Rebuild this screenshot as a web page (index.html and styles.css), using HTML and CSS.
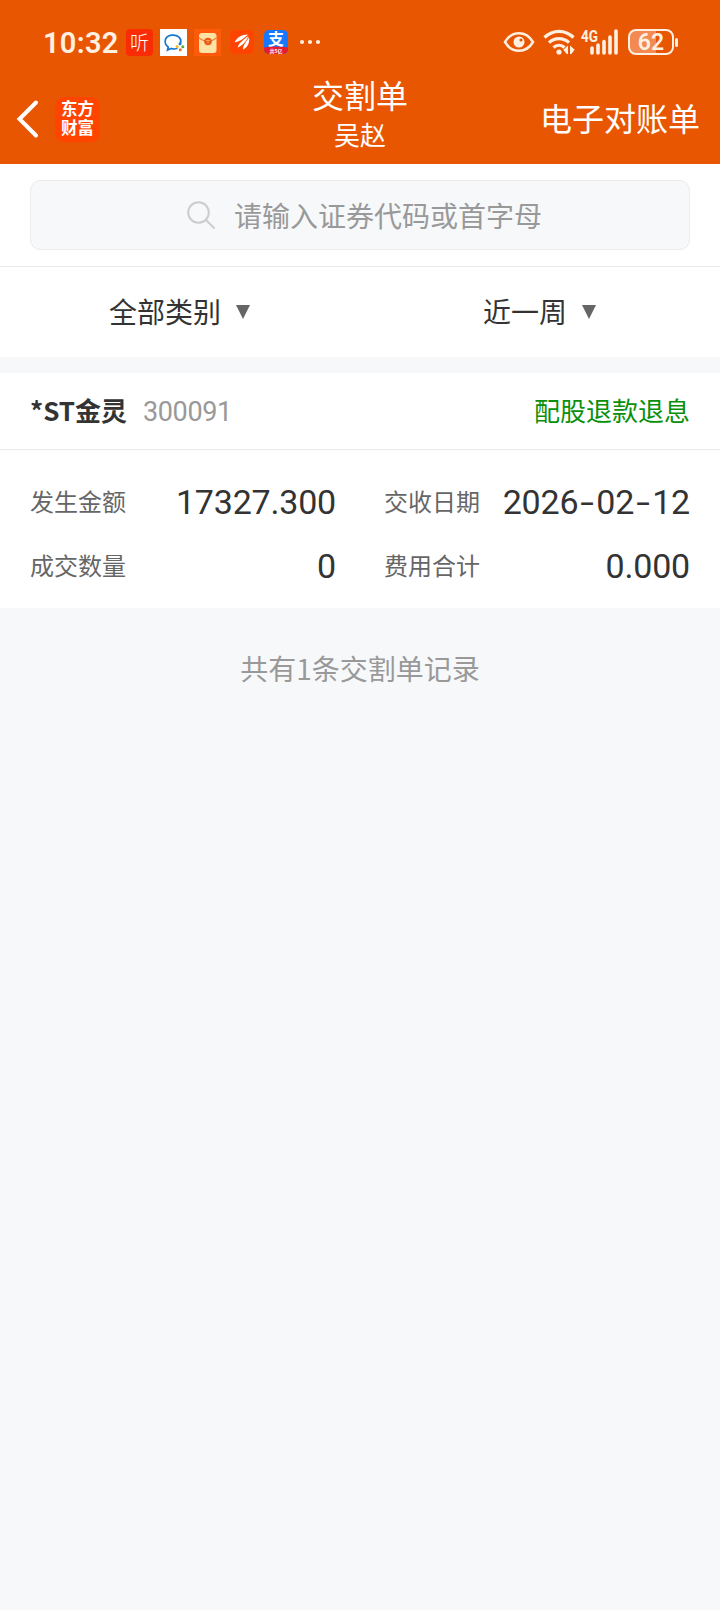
FILE: index.html
```html
<!DOCTYPE html>
<html lang="zh-CN">
<head>
  <meta charset="UTF-8" />
  <meta name="viewport" content="width=device-width, initial-scale=1.0"/>
  <title>交割单</title>
  <link rel="stylesheet" href="styles.css">
</head>
<body>
  <header class="top">
    <div class="statusBar">
      <span class="time">10:32</span>
      <div class="appIcons">
        <span class="appIcon listen">听</span>
        <svg class="appIcon" viewBox="0 0 27 27">
          <rect width="27" height="27" fill="#fff"/>
          <path d="M17.5 19.300c-2 .8-4.300.9-6.300.2L7.500 21l.7-3C3.500 14.500 4 7.500 11.500 6.200 18 5.300 22 9.500 20.500 14" fill="none" stroke="#1878cf" stroke-width="1.700"/>
          <circle cx="20" cy="14.800" r="1.500" fill="#1878cf"/>
          <circle cx="17.200" cy="17.500" r="1.500" fill="#f6b924"/>
          <circle cx="22.800" cy="17.700" r="1.500" fill="#54ad31"/>
          <circle cx="20.300" cy="20.700" r="1.500" fill="#e66a35"/>
        </svg>
        <svg class="appIcon" viewBox="0 0 27 27">
          <rect width="27" height="27" fill="#ff5a0b"/>
          <rect x="5" y="4" width="17.500" height="20" rx="3" fill="#ffe2a4"/>
          <path d="M5 8.500c3 4.500 14.500 4.500 17.500 0" fill="none" stroke="#e87938" stroke-width="1.200"/>
          <circle cx="14" cy="12.500" r="3.800" fill="#e95918"/>
          <path d="M12 11.500h4M14 11.500v3" stroke="#f5a050" stroke-width="1"/>
        </svg>
        <svg class="appIcon small money" viewBox="0 0 24 24">
          <rect width="24" height="24" rx="5" fill="#ff4300"/>
          <path d="M18 4.500C11 4.500 7 7.500 4.500 12.500c4.500-.7 9-3.500 13.500-8zM18.500 5.500C14.500 9.500 9.500 12 7.500 17.500c5-2 9-6 11-12zM19 7c-1.500 4-6 7-6 12.500 4.500-2 7-6.500 6-12.500z" fill="#fff"/>
        </svg>
        <svg class="appIcon small alipay" viewBox="0 0 24 24">
          <rect width="24" height="24" rx="5" fill="#1677ff"/>
          <path d="M0 17.500q12-2 24 0V19a5 5 0 0 1-5 5H5a5 5 0 0 1-5-5z" fill="#e51d2e"/>
          <text x="12" y="15" font-size="16">支</text>
          <text x="12" y="22.500" font-size="5">共5亿</text>
        </svg>
        <svg class="dots" viewBox="0 0 22 6"><g fill="#fff0e2"><circle cx="3" cy="3" r="2.100"/><circle cx="11" cy="3" r="2.100"/><circle cx="19" cy="3" r="2.100"/></g></svg>
      </div>
      <div class="system">
        <svg class="eye" viewBox="0 0 32 22">
          <path d="M2 11C9-.8 23-.8 30 11 23 22.800 9 22.800 2 11z" fill="none" stroke="#fff0e2" stroke-width="2.500"/>
          <circle cx="16" cy="11" r="5.500" fill="#fff0e2"/>
          <circle cx="18" cy="9" r="1.600" fill="#e95602"/>
        </svg>
        <svg class="wifi" viewBox="0 0 32 26">
          <g fill="none" stroke="#fff0e2" stroke-width="3.200">
            <path d="M1.500 8.500C10 .2 22 .2 30.500 8.500"/>
            <path d="M6 13.700c5.500-5.500 14.500-5.500 20 0"/>
            <path d="M10.500 18.500c3-3 8-3 11 0"/>
          </g>
          <circle cx="16" cy="23" r="2.600" fill="#fff0e2"/>
          <path d="M25 16.500v8.500h-1.300l-3.400-4.200zM27 16.500v8.500h1.300l3.400-4.200z" fill="#fff0e2"/>
        </svg>
        <svg class="signal" viewBox="0 0 38 26">
          <text x="0" y="13" textLength="17" lengthAdjust="spacingAndGlyphs">4G</text>
          <path d="M11 19v5M17 16v8M23 12.500V24M29 8v16M35 2v22" fill="none" stroke="#fff0e2" stroke-width="3.600" stroke-linecap="round"/>
        </svg>
        <div class="battery">62</div>
      </div>
    </div>
    <div class="navBar">
      <div class="navLeft">
        <svg class="back" viewBox="0 0 24 40"><path d="M20 3.500 3.500 20 20 36.500" fill="none" stroke="#fff" stroke-width="4" stroke-linecap="round"/></svg>
        <div class="logo">东方<br>财富</div>
      </div>
      <div class="navTitle">
        <h1>交割单</h1>
        <p>吴赵</p>
      </div>
      <div class="navRight">电子对账单</div>
    </div>
  </header>

  <div class="searchRow">
    <div class="searchBox">
      <svg class="searchIcon" viewBox="0 0 28 28"><g fill="none" stroke="#ccc" stroke-width="2" stroke-linecap="round"><circle cx="11.500" cy="11.500" r="10.300"/><path d="M19 19l8 8"/></g></svg>
      <span>请输入证券代码或首字母</span>
    </div>
  </div>

  <div class="filters">
    <div class="filter">全部类别<i class="arrow"></i></div>
    <div class="filter">近一周<i class="arrow"></i></div>
  </div>

  <div class="record">
    <div class="recordHead">
      <strong>*ST金灵</strong>
      <span class="code">300091</span>
      <span class="type">配股退款退息</span>
    </div>
    <div class="recordBody">
      <div class="cell"><label>发生金额</label><span>17327.300</span></div>
      <div class="cell"><label>交收日期</label><span>2026<em>-</em>02<em>-</em>12</span></div>
      <div class="cell"><label>成交数量</label><span>0</span></div>
      <div class="cell"><label>费用合计</label><span>0.000</span></div>
    </div>
  </div>

  <p class="total">共有1条交割单记录</p>
</body>
</html>
```
FILE: styles.css
```css
* {
  box-sizing: border-box;
}

body {
  margin: 0;
  min-height: 100vh;
  background-color: #f7f8fa;
  color: #333;
  font-family: "Noto Sans CJK SC", sans-serif;
}

h1, p {
  margin: 0;
  font-weight: normal;
}

svg {
  display: block;
  flex-shrink: 0;
  overflow: visible;
}

.top {
  height: 164px;
  background-color: #e95602;
  color: #fff;
}

/* status bar */
.statusBar {
  display: flex;
  align-items: center;
  height: 84px;
  padding: 0 41px 0 43px;
}

.time {
  width: 83px;
  padding-top: 1px;
  color: #fff0e2;
  font: 600 29px/40px Roboto, sans-serif;
  letter-spacing: 0.3px;
  white-space: nowrap;
}

.appIcons {
  display: flex;
  align-items: center;
  gap: 7px;
}

.appIcon {
  flex-shrink: 0;
  width: 27px;
  height: 27px;
}

.appIcon.small {
  width: 24px;
  height: 24px;
}

.listen {
  border-radius: 4px;
  background-color: #fa2c05;
  font-size: 19px;
  font-weight: 300;
  line-height: 26px;
  text-align: center;
}

.money {
  margin: 0 3px 0 2px;
}

.alipay text {
  fill: #fff;
  font-weight: 700;
  text-anchor: middle;
}

.dots {
  width: 22px;
  height: 6px;
  margin-left: 4px;
}

.system {
  display: flex;
  align-items: center;
  margin-left: auto;
}

.eye {
  width: 32px;
  height: 22px;
  margin-right: 8px;
}

.wifi {
  width: 32px;
  height: 26px;
  margin-right: 6px;
}

.signal {
  width: 38px;
  height: 26px;
  margin-right: 9px;
}

.signal text {
  fill: #fff0e2;
  font: 700 17px Roboto, sans-serif;
}

.battery {
  position: relative;
  width: 46px;
  height: 26px;
  margin-right: 5px;
  border: 2px solid #fff0e2;
  border-radius: 8px;
  background: linear-gradient(90deg, #f28a52 62%, #e95602 62%);
  color: #fff0e2;
  font: 600 23px/23px Roboto, sans-serif;
  text-align: center;
}

.battery::after {
  content: "";
  position: absolute;
  top: 7px;
  right: -6px;
  width: 3px;
  height: 9px;
  border-radius: 2px;
  background-color: #fff0e2;
}

/* nav bar */
.navBar {
  display: grid;
  grid-template-columns: 1fr auto 1fr;
  height: 80px;
}

.navLeft {
  display: flex;
  align-items: center;
  height: 70px;
  padding-left: 16px;
}

.back {
  width: 24px;
  height: 40px;
}

.logo {
  width: 45px;
  height: 45px;
  margin-left: 15px;
  padding-top: 2px;
  border-radius: 9px;
  background-color: #ff4400;
  font-size: 16.5px;
  font-weight: 700;
  line-height: 19.5px;
  text-align: center;
}

.navTitle {
  margin-top: -12px;
  text-align: center;
}

.navTitle h1 {
  font-size: 32px;
  line-height: 44px;
}

.navTitle p {
  font-size: 26px;
  line-height: 36px;
}

.navRight {
  padding-right: 20px;
  font-size: 32px;
  line-height: 67px;
  text-align: right;
}

/* search */
.searchRow {
  height: 103px;
  padding: 16px 30px 0;
  border-bottom: 1px solid #ebebeb;
  background-color: #fff;
}

.searchBox {
  display: flex;
  justify-content: center;
  align-items: center;
  height: 70px;
  padding-left: 9px;
  border: 1px solid #ececec;
  border-radius: 10px;
  background-color: #f7f8fa;
  color: #999;
  font-size: 28px;
  line-height: 66px;
}

.searchBox span {
  margin-top: -1px;
}

.searchIcon {
  width: 28px;
  height: 28px;
  margin-right: 19px;
}

/* filters */
.filters {
  display: grid;
  grid-template-columns: 1fr 1fr;
  height: 90px;
  background-color: #fff;
}

.filter {
  display: flex;
  justify-content: center;
  align-items: center;
  height: 88px;
  padding-right: 1px;
  font-size: 28px;
}

.arrow {
  margin: 1px 0 0 15px;
  border: 7.5px solid transparent;
  border-top: 14px solid #666;
  border-bottom: 0;
}

/* record */
.record {
  margin-top: 16px;
  background-color: #fff;
}

.recordHead {
  display: flex;
  align-items: center;
  height: 77px;
  padding: 0 30px 4px;
  border-bottom: 1px solid #ebebeb;
  font-size: 26px;
}

.code {
  margin-left: 16px;
  padding-top: 5px;
  color: #999;
  font-family: Roboto, sans-serif;
  font-size: 27px;
  letter-spacing: -0.4px;
}

.type {
  margin-left: auto;
  color: #0a8f0a;
}

.recordBody {
  display: grid;
  grid-template-columns: 1fr 1fr;
  column-gap: 48px;
  height: 158px;
  padding: 20px 30px 10px;
}

.cell {
  display: flex;
  justify-content: space-between;
  align-items: center;
  height: 64px;
}

.cell label {
  padding-bottom: 3px;
  color: #666;
  font-size: 24px;
}

.cell span {
  font-family: Roboto, sans-serif;
  font-size: 34px;
  letter-spacing: -0.2px;
}

.cell em {
  display: inline-block;
  width: 18px;
  font-style: normal;
  text-align: center;
  transform: scaleX(1.45);
}

.total {
  margin-top: 39px;
  color: #999;
  font-size: 28px;
  line-height: 42px;
  text-align: center;
}
```
